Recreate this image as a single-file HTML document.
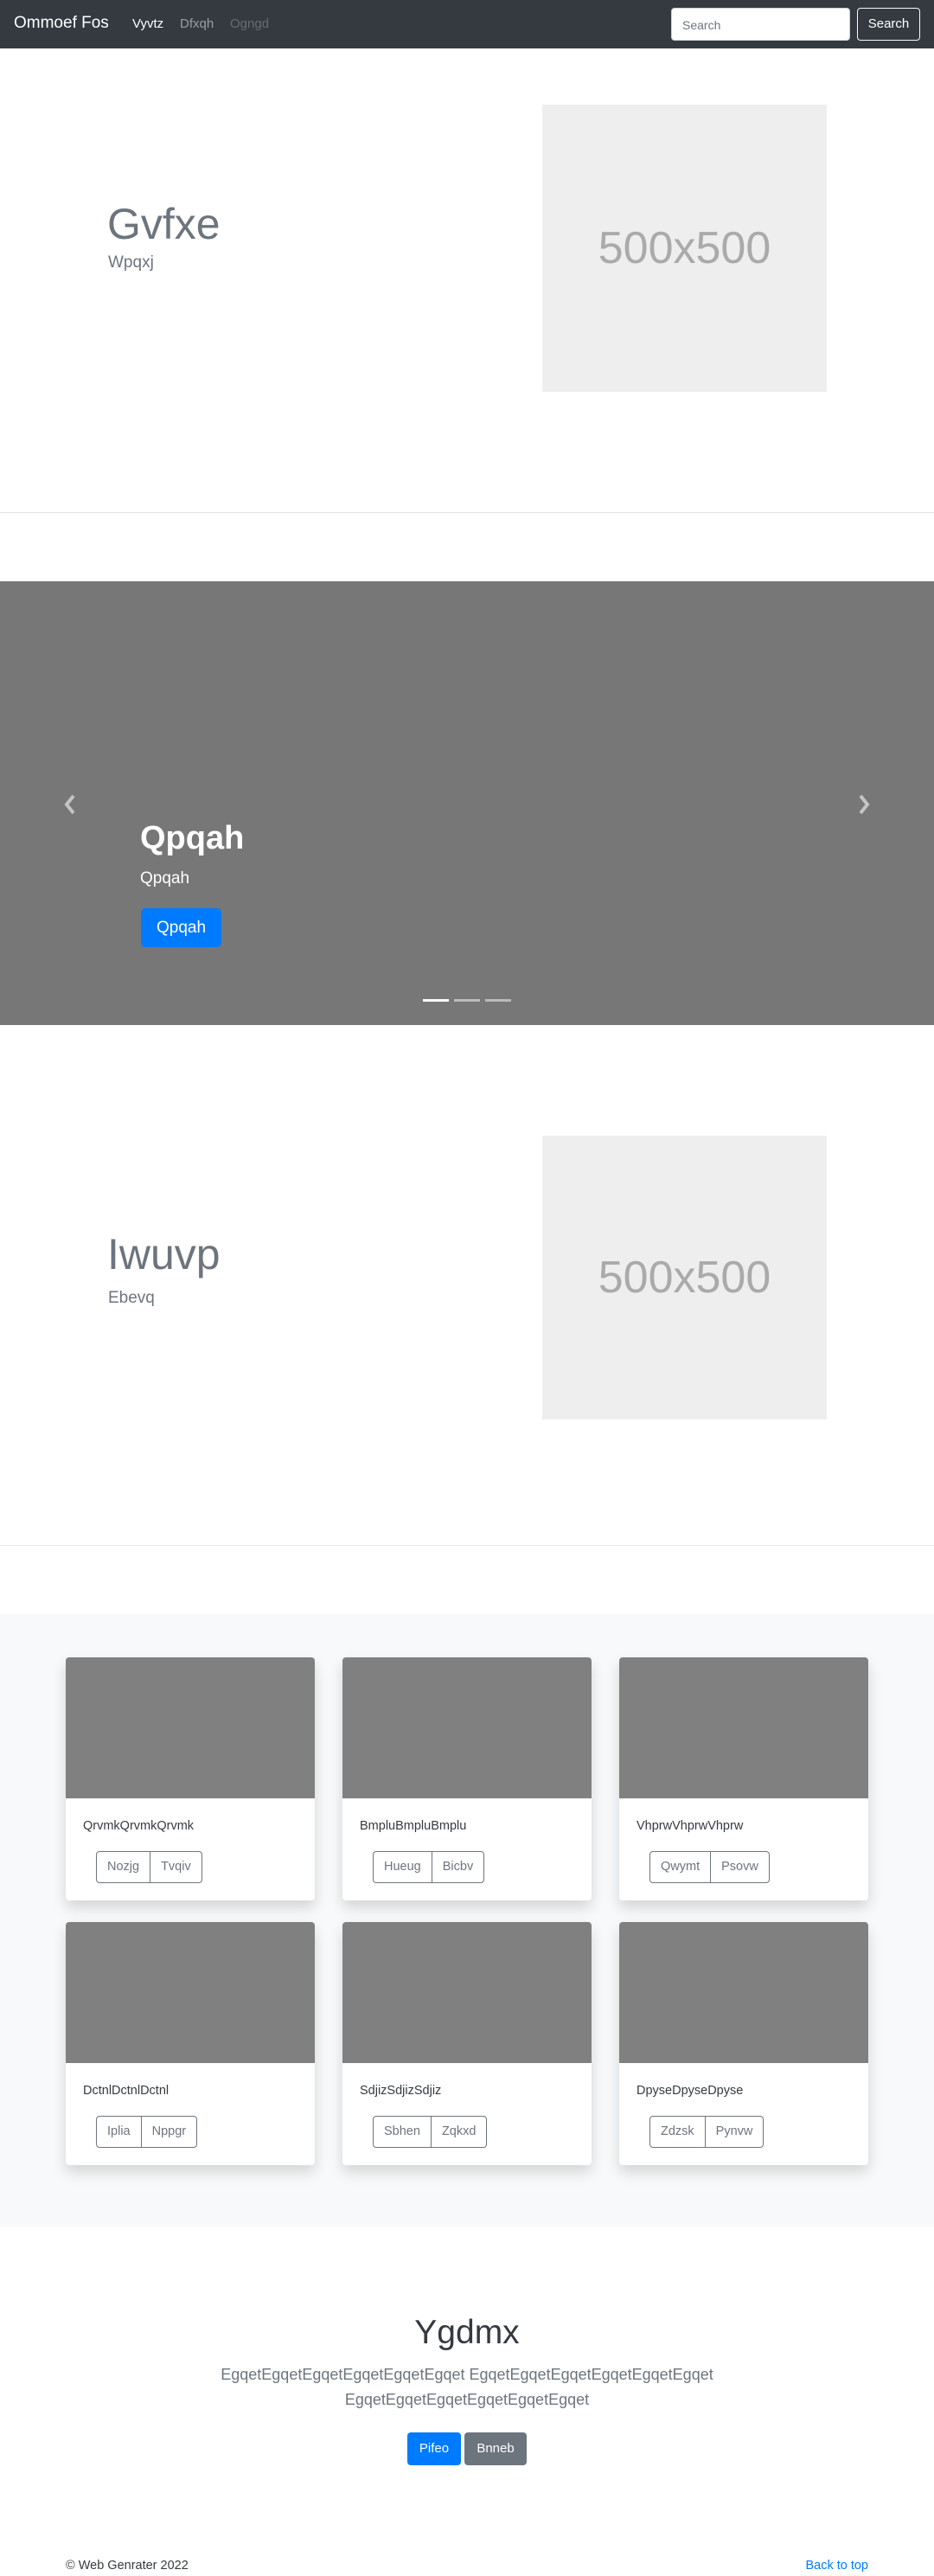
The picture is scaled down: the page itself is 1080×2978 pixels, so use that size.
<!DOCTYPE html>
<html><head><meta charset="utf-8">
<style>
*{margin:0;padding:0;box-sizing:border-box}
body{width:1080px;height:2978px;position:relative;background:#fff;font-family:"Liberation Sans",sans-serif;overflow:hidden}
.a{position:absolute;white-space:nowrap}
.nav{left:0;top:0;width:1080px;height:56px;background:#343a40}
.ph{background:#eee;color:#aaa;font-size:52px;display:flex;align-items:center;justify-content:center}
.card{background:#fff;width:288px;height:281px;border-radius:4px;box-shadow:0 8px 16px rgba(0,0,0,.15)}
.card .img{height:163px;background:#808080;border-radius:4px 4px 0 0}
.card .t{position:absolute;left:20px;top:187px;font-size:14.5px;color:#343a40}
.bg{position:absolute;left:35px;top:224px;display:flex;height:37px;border:1px solid #6c757d;border-radius:4px}
.bg span{font-size:14.5px;color:#6c757d;padding:0 12px;line-height:35px}
.bg span+span{border-left:1px solid #6c757d}
</style></head><body>
<div class="a nav"></div>
<div class="a" style="left:16px;top:16px;font-size:19px;color:#fff">Ommoef Fos</div>
<div class="a" style="left:153px;top:19px;font-size:15px;color:#fff">Vyvtz</div>
<div class="a" style="left:208px;top:19px;font-size:15px;color:rgba(255,255,255,.5)">Dfxqh</div>
<div class="a" style="left:266px;top:19px;font-size:15px;color:rgba(255,255,255,.25)">Ogngd</div>
<div class="a" style="left:776px;top:9px;width:207px;height:38px;background:#fff;border-radius:4px;border:1px solid #ced4da;font-size:14px;color:#6c757d;padding:11px 12px 0">Search</div>
<div class="a" style="left:991px;top:9px;width:73px;height:38px;border:1px solid #f8f9fa;border-radius:4px;color:#fff;font-size:15px;text-align:center;line-height:36px">Search</div>

<div class="a" style="left:124px;top:230px;font-size:50px;font-weight:300;color:#6c757d">Gvfxe</div>
<div class="a" style="left:125px;top:293px;font-size:19px;color:#6c757d">Wpqxj</div>
<div class="a ph" style="left:627px;top:121px;width:329px;height:332px">500x500</div>
<div class="a" style="left:0;top:592px;width:1080px;height:1px;background:#e5e5e5"></div>

<div class="a" style="left:0;top:672px;width:1080px;height:513px;background:#777"></div>
<svg class="a" style="left:70px;top:916px" width="22" height="28" viewBox="0 0 22 28"><path d="M15 4 L7 14 L15 24" stroke="#c4c4c4" stroke-width="4" fill="none"/></svg>
<svg class="a" style="left:988px;top:916px" width="22" height="28" viewBox="0 0 22 28"><path d="M7 4 L15 14 L7 24" stroke="#c4c4c4" stroke-width="4" fill="none"/></svg>
<div class="a" style="left:162px;top:948px;font-size:38px;font-weight:bold;color:#fff">Qpqah</div>
<div class="a" style="left:162px;top:1005px;font-size:19px;color:#fff">Qpqah</div>
<div class="a" style="left:163px;top:1050px;width:93px;height:45px;background:#007bff;border-radius:5px;color:#fff;font-size:19px;text-align:center;line-height:45px">Qpqah</div>
<div class="a" style="left:489px;top:1155px;width:30px;height:3px;background:#fff"></div>
<div class="a" style="left:525px;top:1155px;width:30px;height:3px;background:rgba(255,255,255,.5)"></div>
<div class="a" style="left:561px;top:1155px;width:30px;height:3px;background:rgba(255,255,255,.5)"></div>

<div class="a" style="left:124px;top:1421px;font-size:50px;font-weight:300;color:#6c757d">Iwuvp</div>
<div class="a" style="left:125px;top:1490px;font-size:19px;color:#6c757d">Ebevq</div>
<div class="a ph" style="left:627px;top:1313px;width:329px;height:328px">500x500</div>
<div class="a" style="left:0;top:1786px;width:1080px;height:1px;background:#e5e5e5"></div>

<div class="a" style="left:0;top:1866px;width:1080px;height:708px;background:#f8f9fa"></div>
<div class="a card" style="left:76px;top:1916px"><div class="img"></div><div class="t">QrvmkQrvmkQrvmk</div><div class="bg"><span>Nozjg</span><span>Tvqiv</span></div></div>
<div class="a card" style="left:396px;top:1916px"><div class="img"></div><div class="t">BmpluBmpluBmplu</div><div class="bg"><span>Hueug</span><span>Bicbv</span></div></div>
<div class="a card" style="left:716px;top:1916px"><div class="img"></div><div class="t">VhprwVhprwVhprw</div><div class="bg"><span>Qwymt</span><span>Psovw</span></div></div>
<div class="a card" style="left:76px;top:2222px"><div class="img"></div><div class="t">DctnlDctnlDctnl</div><div class="bg"><span>Iplia</span><span>Nppgr</span></div></div>
<div class="a card" style="left:396px;top:2222px"><div class="img"></div><div class="t">SdjizSdjizSdjiz</div><div class="bg"><span>Sbhen</span><span>Zqkxd</span></div></div>
<div class="a card" style="left:716px;top:2222px"><div class="img"></div><div class="t">DpyseDpyseDpyse</div><div class="bg"><span>Zdzsk</span><span>Pynvw</span></div></div>

<div class="a" style="left:0;top:2675px;width:1080px;text-align:center;font-size:39px;font-weight:300;color:#343a40">Ygdmx</div>
<div class="a" style="left:190px;top:2731px;width:700px;text-align:center;font-size:18px;line-height:29px;color:#6c757d;white-space:normal">EgqetEgqetEgqetEgqetEgqetEgqet EgqetEgqetEgqetEgqetEgqetEgqet EgqetEgqetEgqetEgqetEgqetEgqet</div>
<div class="a" style="left:471px;top:2812px;width:62px;height:38px;background:#007bff;border-radius:4px;color:#fff;font-size:15px;text-align:center;line-height:38px">Pifeo</div>
<div class="a" style="left:537px;top:2812px;width:72px;height:38px;background:#6c757d;border-radius:4px;color:#fff;font-size:15px;text-align:center;line-height:38px">Bnneb</div>
<div class="a" style="left:76px;top:2958px;font-size:14.5px;color:#343a40">© Web Genrater 2022</div>
<div class="a" style="left:924px;top:2958px;width:80px;text-align:right;font-size:14.5px;color:#007bff">Back to top</div>
</body></html>
